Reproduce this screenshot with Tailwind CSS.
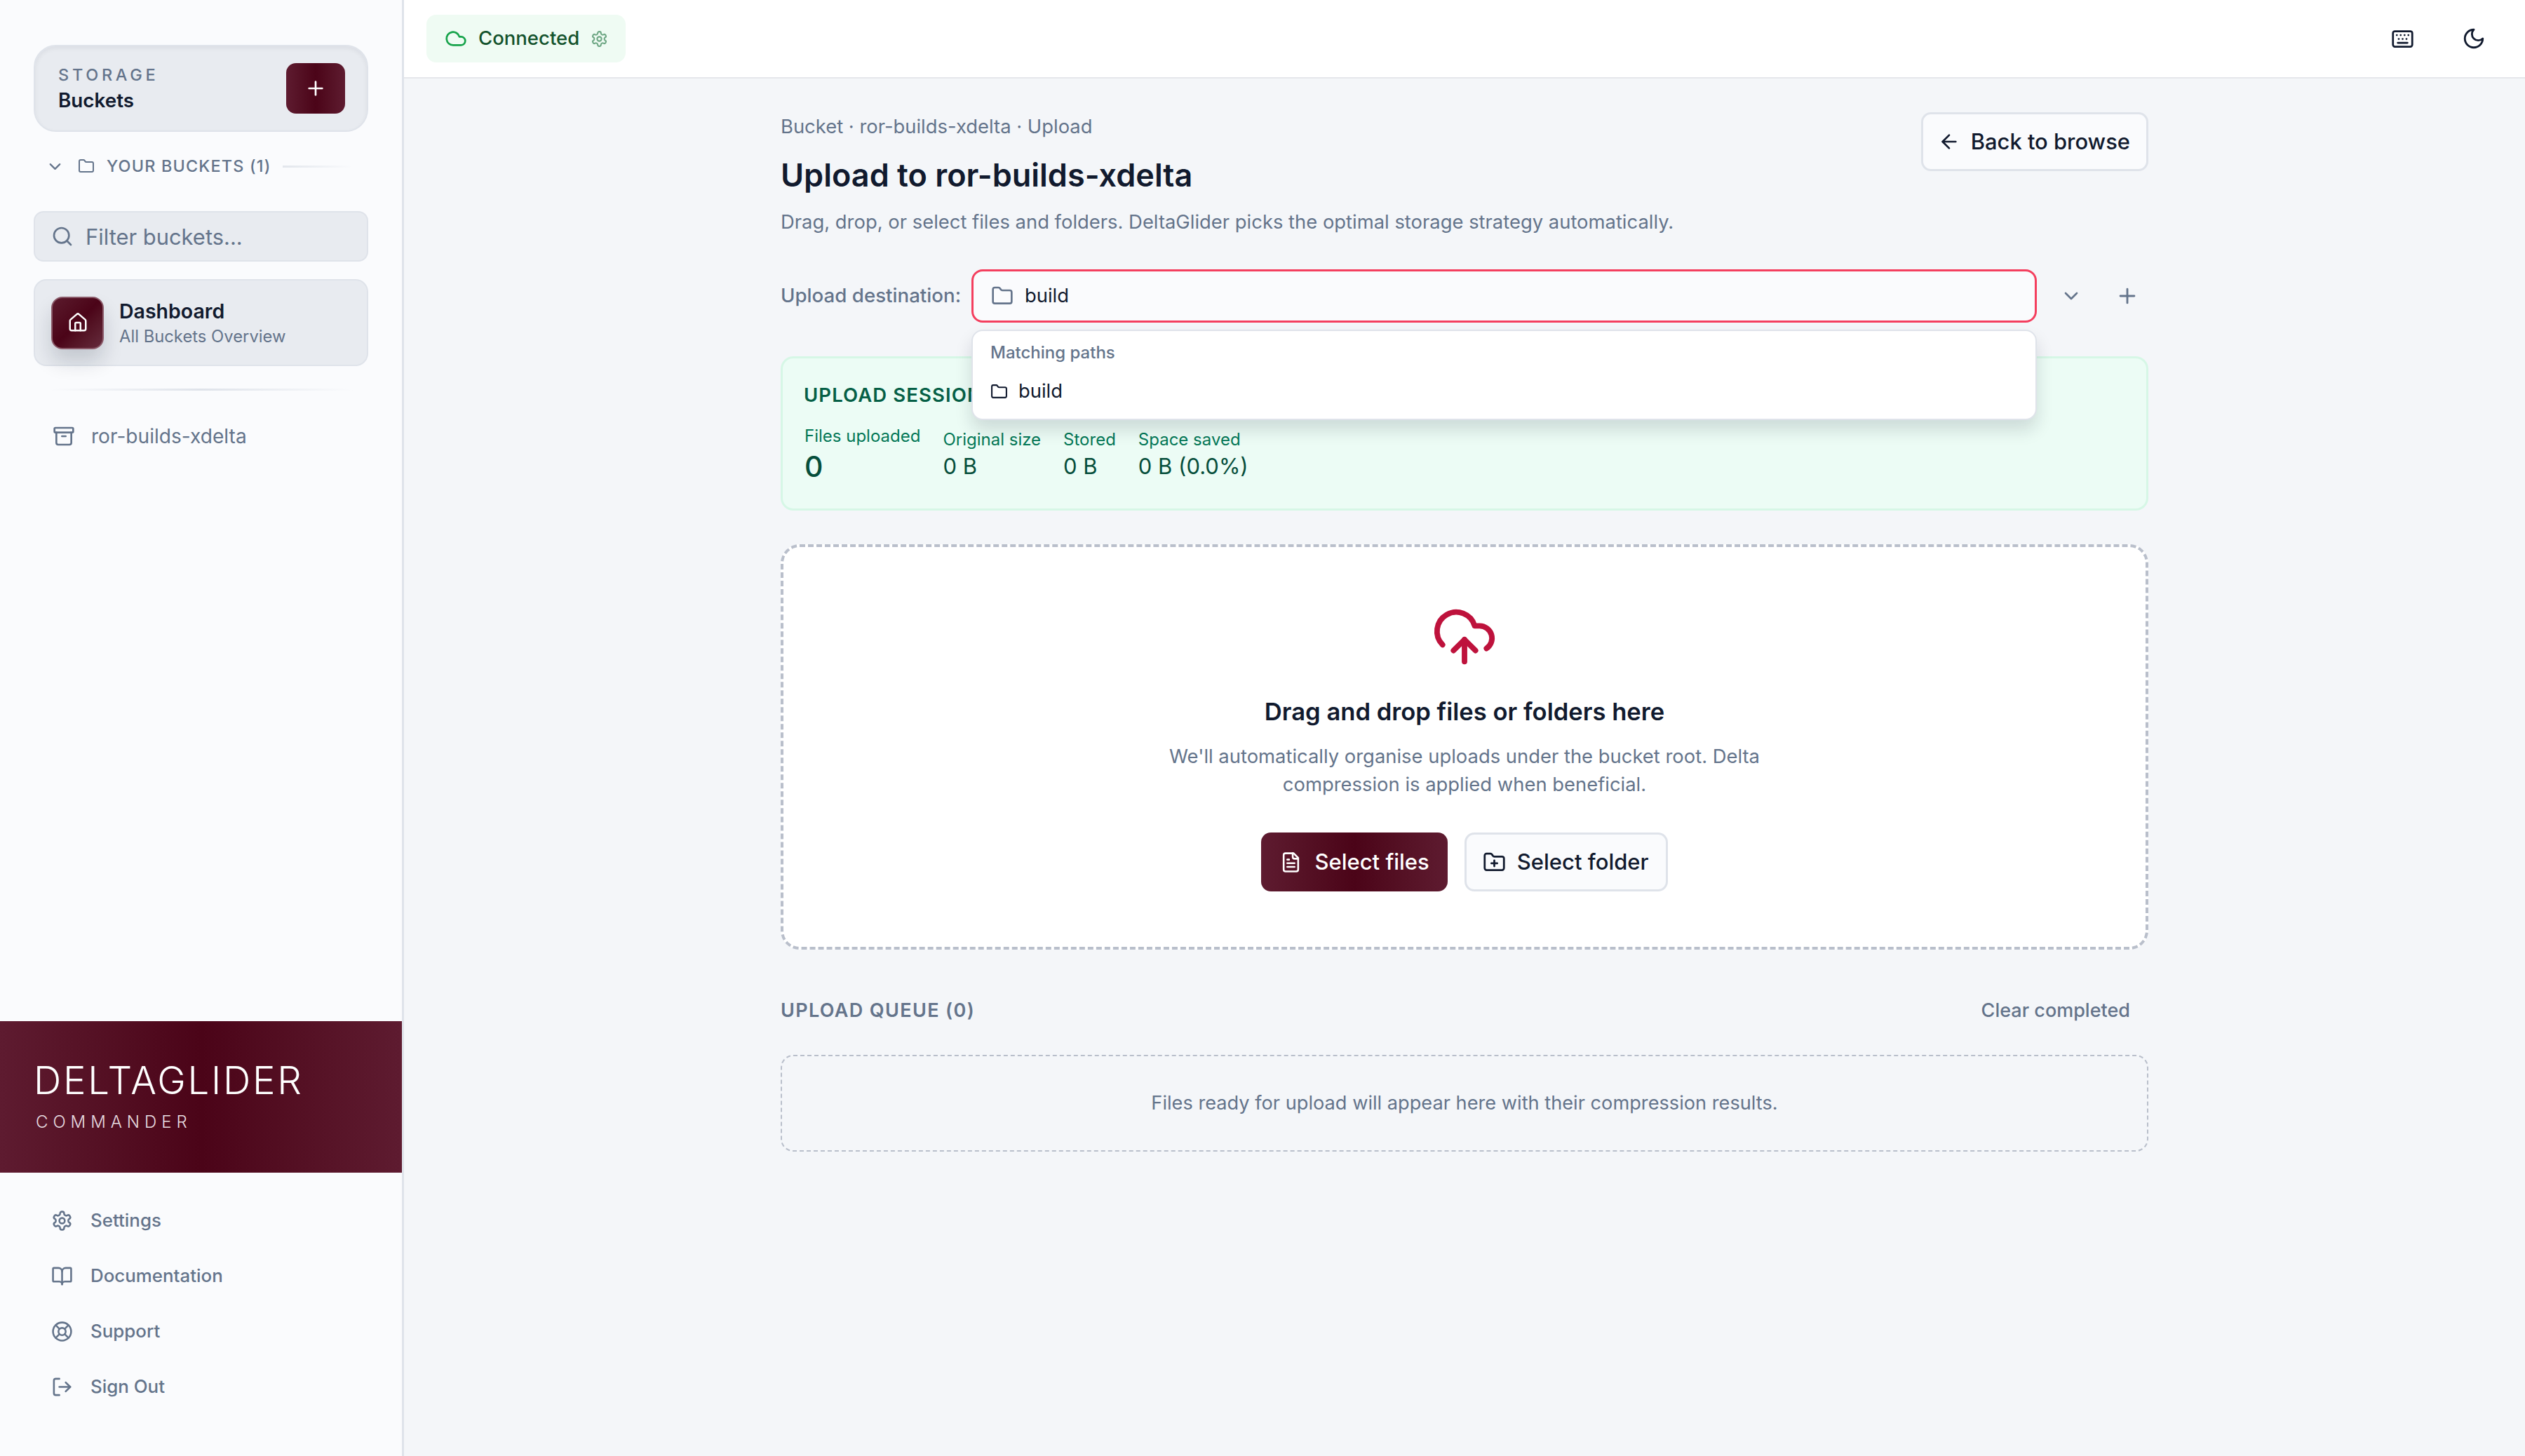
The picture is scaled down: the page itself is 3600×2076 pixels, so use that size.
<!DOCTYPE html>
<html lang="en">
  <head>
    <meta charset="UTF-8" />
    <meta name="viewport" content="width=device-width, initial-scale=1.0" />
    <script src="https://cdn.jsdelivr.net/npm/@tailwindcss/browser@4"></script>
    <title>DeltaGlider Commander</title>
  </head>
  <body class="flex h-screen overflow-hidden bg-[#f4f6f9] font-['Inter',sans-serif] text-[#111a2e]">
    <!-- SIDEBAR -->
    <aside class="flex flex-col w-[576px] h-full shrink-0 bg-[#fafbfd] border-r-[3px] border-[#dfe3ea]">
      <div class="px-[48px] pt-[64px]">
        <div class="flex items-center justify-between h-[124px] pl-[33px] pr-[31px] rounded-[32px] bg-[#e8ebf0] border-[2px] border-[#dfe3ea] shadow-[inset_0_3px_6px_rgba(15,23,42,0.06)]">
          <div class="mb-[3px]">
            <p class="text-[23.5px] leading-[36px] font-medium tracking-[0.2em] text-[#64748b]">STORAGE</p>
            <p class="text-[27.8px] leading-[36px] font-semibold text-[#111a2e]">Buckets</p>
          </div>
          <button class="flex items-center justify-center w-[84px] h-[72px] rounded-[14px] bg-linear-to-r from-[#5e1b30] via-[#4b0418] to-[#5e1b30] text-white">
            <svg class="w-[32px] h-[32px]" viewBox="0 0 24 24" fill="none" stroke="currentColor" stroke-width="2" stroke-linecap="round" stroke-linejoin="round"><path d="M5 12h14" /><path d="M12 5v14" /></svg>
          </button>
        </div>
      </div>

      <div class="flex items-center h-[36px] mt-[31px] pl-[65px] pr-[70px] text-[#64748b]">
        <svg class="w-[27px] h-[27px] shrink-0" viewBox="0 0 24 24" fill="none" stroke="currentColor" stroke-width="2" stroke-linecap="round" stroke-linejoin="round"><path d="m6 9 6 6 6-6" /></svg>
        <svg class="w-[24px] h-[24px] shrink-0 ml-[19px]" viewBox="0 0 24 24" fill="none" stroke="currentColor" stroke-width="2" stroke-linecap="round" stroke-linejoin="round"><path d="M20 20a2 2 0 0 0 2-2V8a2 2 0 0 0-2-2h-7.9a2 2 0 0 1-1.69-.9L9.6 3.9A2 2 0 0 0 7.93 3H4a2 2 0 0 0-2 2v13a2 2 0 0 0 2 2Z" /></svg>
        <span class="ml-[17px] text-[23.4px] font-medium tracking-[0.05em] whitespace-nowrap">YOUR BUCKETS (1)</span>
        <span class="flex-1 h-[3px] ml-[16px] bg-linear-to-r from-[#e2e6ec] to-transparent"></span>
      </div>

      <div class="px-[48px] mt-[46px]">
        <div class="flex items-center h-[72px] pl-[23px] rounded-[14px] bg-[#e8ebf0] border-[2px] border-[#dfe3ea]">
          <svg class="w-[32px] h-[32px] shrink-0 text-[#64748b]" viewBox="0 0 24 24" fill="none" stroke="currentColor" stroke-width="2" stroke-linecap="round" stroke-linejoin="round"><circle cx="11" cy="11" r="8" /><path d="m21 21-4.3-4.3" /></svg>
          <span class="ml-[17px] mt-[2px] text-[30.9px] text-[#64748b]">Filter buckets...</span>
        </div>

        <div class="flex items-center h-[124px] mt-[25px] pl-[23px] rounded-[18px] bg-[#e8ebf0] border-[2px] border-[#dfe3ea]">
          <div class="flex items-center justify-center w-[75px] h-[75px] rounded-[16px] bg-linear-to-br from-[#5b1a2d] via-[#4b0418] to-[#652b3d] border-[2px] border-[#8a5a69] text-white shadow-[0_18px_28px_rgba(15,23,42,0.16)]">
            <svg class="w-[30px] h-[30px]" viewBox="0 0 24 24" fill="none" stroke="currentColor" stroke-width="2" stroke-linecap="round" stroke-linejoin="round"><path d="M15 21v-8a1 1 0 0 0-1-1h-4a1 1 0 0 0-1 1v8" /><path d="M3 10a2 2 0 0 1 .709-1.528l7-5.999a2 2 0 0 1 2.582 0l7 5.999A2 2 0 0 1 21 10v9a2 2 0 0 1-2 2H5a2 2 0 0 1-2-2z" /></svg>
          </div>
          <div class="ml-[22px] mt-[2px]">
            <p class="text-[28.5px] leading-[38px] font-semibold text-[#111a2e]">Dashboard</p>
            <p class="text-[23.8px] leading-[34px] text-[#64748b]">All Buckets Overview</p>
          </div>
        </div>
      </div>

      <div class="h-[3px] mt-[32px] mx-[70px] bg-linear-to-r from-transparent via-[#dfe3ea] to-transparent"></div>

      <div class="flex items-center h-[50px] mt-[40px] pl-[75px] text-[#64748b]">
        <svg class="w-[32px] h-[32px] shrink-0" viewBox="0 0 24 24" fill="none" stroke="currentColor" stroke-width="2" stroke-linecap="round" stroke-linejoin="round"><rect width="20" height="5" x="2" y="3" rx="1" /><path d="M4 8v11a2 2 0 0 0 2 2h12a2 2 0 0 0 2-2V8" /><path d="M10 12h4" /></svg>
        <span class="ml-[23px] text-[28.1px]">ror-builds-xdelta</span>
      </div>

      <!-- BRAND -->
      <div class="mt-auto flex flex-col justify-center h-[216px] pl-[48px] bg-linear-to-r from-[#5e1b30] via-[#4b0418] to-[#5e1b30]">
        <p class="-mt-[4px] text-[54.6px] leading-[64px] font-light tracking-[0.05em] text-white">DELTAGLIDER</p>
        <p class="ml-[3px] mt-[12px] text-[24px] leading-[32px] font-light tracking-[0.29em] text-[#e8dde1]">COMMANDER</p>
      </div>

      <!-- SIDEBAR FOOTER -->
      <nav class="flex flex-col gap-[47px] pt-[52px] pb-[83px] pl-[73px] text-[#64748b] text-[25.9px] font-medium">
        <a class="flex items-center h-[32px] gap-[25px]">
          <svg class="w-[31px] h-[31px] shrink-0" viewBox="0 0 24 24" fill="none" stroke="currentColor" stroke-width="2" stroke-linecap="round" stroke-linejoin="round"><path d="M12.22 2h-.44a2 2 0 0 0-2 2v.18a2 2 0 0 1-1 1.73l-.43.25a2 2 0 0 1-2 0l-.15-.08a2 2 0 0 0-2.73.73l-.22.38a2 2 0 0 0 .73 2.73l.15.1a2 2 0 0 1 1 1.72v.51a2 2 0 0 1-1 1.74l-.15.09a2 2 0 0 0-.73 2.73l.22.38a2 2 0 0 0 2.73.73l.15-.08a2 2 0 0 1 2 0l.43.25a2 2 0 0 1 1 1.73V20a2 2 0 0 0 2 2h.44a2 2 0 0 0 2-2v-.18a2 2 0 0 1 1-1.73l.43-.25a2 2 0 0 1 2 0l.15.08a2 2 0 0 0 2.73-.73l.22-.39a2 2 0 0 0-.73-2.73l-.15-.08a2 2 0 0 1-1-1.74v-.5a2 2 0 0 1 1-1.74l.15-.09a2 2 0 0 0 .73-2.73l-.22-.38a2 2 0 0 0-2.73-.73l-.15.08a2 2 0 0 1-2 0l-.43-.25a2 2 0 0 1-1-1.73V4a2 2 0 0 0-2-2z" /><circle cx="12" cy="12" r="3" /></svg>
          Settings
        </a>
        <a class="flex items-center h-[32px] gap-[25px]">
          <svg class="w-[31px] h-[31px] shrink-0" viewBox="0 0 24 24" fill="none" stroke="currentColor" stroke-width="2" stroke-linecap="round" stroke-linejoin="round"><path d="M12 7v14" /><path d="M3 18a1 1 0 0 1-1-1V4a1 1 0 0 1 1-1h5a4 4 0 0 1 4 4 4 4 0 0 1 4-4h5a1 1 0 0 1 1 1v13a1 1 0 0 1-1 1h-6a3 3 0 0 0-3 3 3 3 0 0 0-3-3z" /></svg>
          Documentation
        </a>
        <a class="flex items-center h-[32px] gap-[25px]">
          <svg class="w-[31px] h-[31px] shrink-0" viewBox="0 0 24 24" fill="none" stroke="currentColor" stroke-width="2" stroke-linecap="round" stroke-linejoin="round"><circle cx="12" cy="12" r="10" /><path d="m4.93 4.93 4.24 4.24" /><path d="m14.83 9.17 4.24-4.24" /><path d="m14.83 14.83 4.24 4.24" /><path d="m9.17 14.83-4.24 4.24" /><circle cx="12" cy="12" r="4" /></svg>
          Support
        </a>
        <a class="flex items-center h-[32px] gap-[25px]">
          <svg class="w-[31px] h-[31px] shrink-0" viewBox="0 0 24 24" fill="none" stroke="currentColor" stroke-width="2" stroke-linecap="round" stroke-linejoin="round"><path d="M9 21H5a2 2 0 0 1-2-2V5a2 2 0 0 1 2-2h4" /><path d="m16 17 5-5-5-5" /><path d="M21 12H9" /></svg>
          Sign Out
        </a>
      </nav>
    </aside>

    <div class="flex flex-col flex-1 min-w-0">
      <!-- HEADER -->
      <header class="flex items-center justify-between h-[112px] shrink-0 pl-[32px] pr-[56px] bg-white border-b-[2px] border-[#e5e7eb]">
        <div class="flex items-center h-[68px] pl-[26px] pr-[25px] rounded-[14px] bg-[#effbf3]">
          <svg class="w-[32px] h-[32px] text-[#16a34a]" viewBox="0 0 24 24" fill="none" stroke="currentColor" stroke-width="2" stroke-linecap="round" stroke-linejoin="round"><path d="M17.5 19H9a7 7 0 1 1 6.71-9h1.79a4.5 4.5 0 1 1 0 9Z" /></svg>
          <span class="ml-[16px] text-[27.5px] font-medium text-[#14532d]">Connected</span>
          <svg class="ml-[16px] w-[25px] h-[25px] text-[#6ea784]" viewBox="0 0 24 24" fill="none" stroke="currentColor" stroke-width="2" stroke-linecap="round" stroke-linejoin="round"><path d="M12.22 2h-.44a2 2 0 0 0-2 2v.18a2 2 0 0 1-1 1.73l-.43.25a2 2 0 0 1-2 0l-.15-.08a2 2 0 0 0-2.73.73l-.22.38a2 2 0 0 0 .73 2.73l.15.1a2 2 0 0 1 1 1.72v.51a2 2 0 0 1-1 1.74l-.15.09a2 2 0 0 0-.73 2.73l.22.38a2 2 0 0 0 2.73.73l.15-.08a2 2 0 0 1 2 0l.43.25a2 2 0 0 1 1 1.73V20a2 2 0 0 0 2 2h.44a2 2 0 0 0 2-2v-.18a2 2 0 0 1 1-1.73l.43-.25a2 2 0 0 1 2 0l.15.08a2 2 0 0 0 2.73-.73l.22-.39a2 2 0 0 0-.73-2.73l-.15-.08a2 2 0 0 1-1-1.74v-.5a2 2 0 0 1 1-1.74l.15-.09a2 2 0 0 0 .73-2.73l-.22-.38a2 2 0 0 0-2.73-.73l-.15.08a2 2 0 0 1-2 0l-.43-.25a2 2 0 0 1-1-1.73V4a2 2 0 0 0-2-2z" /><circle cx="12" cy="12" r="3" /></svg>
        </div>
        <div class="flex items-center gap-[68px] text-[#111a2e]">
          <svg class="w-[33px] h-[33px]" viewBox="0 0 24 24" fill="none" stroke="currentColor" stroke-width="2" stroke-linecap="round" stroke-linejoin="round"><path d="M10 8h.01" /><path d="M12 12h.01" /><path d="M14 8h.01" /><path d="M16 12h.01" /><path d="M18 8h.01" /><path d="M6 8h.01" /><path d="M7 16h10" /><path d="M8 12h.01" /><rect width="20" height="16" x="2" y="4" rx="2" /></svg>
          <svg class="w-[34px] h-[34px]" viewBox="0 0 24 24" fill="none" stroke="currentColor" stroke-width="2" stroke-linecap="round" stroke-linejoin="round"><path d="M12 3a6 6 0 0 0 9 9 9 9 0 1 1-9-9Z" /></svg>
        </div>
      </header>

      <!-- MAIN -->
      <main class="flex-1 pl-[537px] pr-[537px] pt-[48px]">
        <div class="flex items-start justify-between">
          <div>
            <p class="text-[27.4px] leading-[40px] text-[#64748b]">Bucket · ror-builds-xdelta · Upload</p>
            <h1 class="mt-[20px] text-[45px] leading-[60px] font-semibold text-[#111a2e]">Upload to ror-builds-xdelta</h1>
            <p class="mt-[16px] text-[27.4px] leading-[40px] text-[#64748b] whitespace-nowrap">Drag, drop, or select files and folders. DeltaGlider picks the optimal storage strategy automatically.</p>
          </div>
          <button class="flex items-center h-[84px] pl-[21px] pr-[23px] rounded-[14px] bg-[#fafbfd] border-[3px] border-[#dfe3ea] text-[#111a2e]">
            <svg class="w-[32px] h-[32px]" viewBox="0 0 24 24" fill="none" stroke="currentColor" stroke-width="2" stroke-linecap="round" stroke-linejoin="round"><path d="m12 19-7-7 7-7" /><path d="M19 12H5" /></svg>
            <span class="ml-[15px] text-[30.9px] font-medium">Back to browse</span>
          </button>
        </div>

        <!-- destination -->
        <div class="relative flex items-center mt-[48px] h-[76px]">
          <span class="w-[272px] shrink-0 text-[27.7px] font-medium text-[#64748b]">Upload destination:</span>
          <div class="flex items-center flex-1 h-[76px] pl-[25px] rounded-[16px] bg-[#fafbfd] border-[3px] border-[#f43f5e]">
            <svg class="w-[32px] h-[32px] text-[#64748b]" viewBox="0 0 24 24" fill="none" stroke="currentColor" stroke-width="2" stroke-linecap="round" stroke-linejoin="round"><path d="M20 20a2 2 0 0 0 2-2V8a2 2 0 0 0-2-2h-7.9a2 2 0 0 1-1.69-.9L9.6 3.9A2 2 0 0 0 7.93 3H4a2 2 0 0 0-2 2v13a2 2 0 0 0 2 2Z" /></svg>
            <span class="ml-[16px] text-[27.4px] text-[#111a2e]">build</span>
          </div>
          <div class="flex items-center w-[159px] shrink-0 pl-[33px] text-[#64748b]">
            <svg class="w-[32px] h-[32px]" viewBox="0 0 24 24" fill="none" stroke="currentColor" stroke-width="2" stroke-linecap="round" stroke-linejoin="round"><path d="m6 9 6 6 6-6" /></svg>
            <svg class="ml-[47px] w-[34px] h-[34px]" viewBox="0 0 24 24" fill="none" stroke="currentColor" stroke-width="2" stroke-linecap="round" stroke-linejoin="round"><path d="M5 12h14" /><path d="M12 5v14" /></svg>
          </div>
          <!-- dropdown over the session card -->
          <div class="absolute z-10 left-[272px] right-[159px] top-[86px] h-[129px] pl-[25px] rounded-[16px] bg-white border-[2px] border-[#dfe3ea] shadow-[0_14px_24px_rgba(15,23,42,0.14)]">
            <p class="mt-[13px] text-[24px] leading-[36px] font-medium text-[#64748b]">Matching paths</p>
            <div class="flex items-center mt-[18px] h-[38px] text-[#111a2e]">
              <svg class="w-[25px] h-[25px]" viewBox="0 0 24 24" fill="none" stroke="currentColor" stroke-width="2" stroke-linecap="round" stroke-linejoin="round"><path d="M20 20a2 2 0 0 0 2-2V8a2 2 0 0 0-2-2h-7.9a2 2 0 0 1-1.69-.9L9.6 3.9A2 2 0 0 0 7.93 3H4a2 2 0 0 0-2 2v13a2 2 0 0 0 2 2Z" /></svg>
              <span class="ml-[15px] text-[27.4px]">build</span>
            </div>
          </div>
        </div>

        <!-- session -->
        <section class="h-[220px] mt-[48px] px-[31px] pt-[32px] rounded-[18px] bg-[#ecfcf5] border-[3px] border-[#d6f7e6]">
          <h2 class="-ml-[1px] text-[27.5px] leading-[40px] font-semibold tracking-[0.04em] text-[#065f46]">UPLOAD SESSION</h2>
          <div class="flex items-end gap-[32px] mt-[23px]">
            <div>
              <p class="text-[24px] leading-[32px] text-[#047857]">Files uploaded</p>
              <p class="mt-[5px] text-[41px] leading-[44px] font-medium text-[#064e3b]">0</p>
            </div>
            <div>
              <p class="text-[24px] leading-[32px] text-[#047857]">Original size</p>
              <p class="text-[31px] leading-[44px] text-[#064e3b]">0 B</p>
            </div>
            <div>
              <p class="text-[24px] leading-[32px] text-[#047857]">Stored</p>
              <p class="text-[31px] leading-[44px] text-[#064e3b]">0 B</p>
            </div>
            <div>
              <p class="text-[24px] leading-[32px] text-[#047857]">Space saved</p>
              <p class="text-[31px] leading-[44px] text-[#064e3b]">0 B (0.0%)</p>
            </div>
          </div>
        </section>

        <!-- dropzone -->
        <section class="flex flex-col items-center h-[578px] mt-[48px] pt-[81px] rounded-[27px] bg-white border-[4px] border-dashed border-[#b9bfcb]">
          <svg class="w-[94px] h-[94px] text-[#be123c]" viewBox="0 0 24 24" fill="none" stroke="currentColor" stroke-width="2" stroke-linecap="round" stroke-linejoin="round"><path d="M12 13v8" /><path d="M4 14.899A7 7 0 1 1 15.71 8h1.79a4.5 4.5 0 0 1 2.5 8.242" /><path d="m8 17 4-4 4 4" /></svg>
          <h3 class="mt-[33px] text-[34.6px] leading-[52px] font-semibold text-[#111a2e]">Drag and drop files or folders here</h3>
          <p class="mt-[18px] w-[880px] text-center text-[27.4px] leading-[40px] text-[#64748b]">We'll automatically organise uploads under the bucket root. Delta compression is applied when beneficial.</p>
          <div class="flex gap-[24px] mt-[49px]">
            <button class="flex items-center h-[84px] pl-[27px] pr-[26px] rounded-[14px] bg-linear-to-r from-[#5e1b30] via-[#4b0418] to-[#5e1b30] text-white">
              <svg class="w-[31px] h-[31px]" viewBox="0 0 24 24" fill="none" stroke="currentColor" stroke-width="2" stroke-linecap="round" stroke-linejoin="round"><path d="M15 2H6a2 2 0 0 0-2 2v16a2 2 0 0 0 2 2h12a2 2 0 0 0 2-2V7Z" /><path d="M14 2v4a2 2 0 0 0 2 2h4" /><path d="M10 9H8" /><path d="M16 13H8" /><path d="M16 17H8" /></svg>
              <span class="ml-[18px] text-[31px] font-medium">Select files</span>
            </button>
            <button class="flex items-center h-[84px] pl-[23px] pr-[24px] rounded-[14px] bg-[#fafbfd] border-[3px] border-[#dfe3ea] text-[#111a2e]">
              <svg class="w-[33px] h-[33px]" viewBox="0 0 24 24" fill="none" stroke="currentColor" stroke-width="2" stroke-linecap="round" stroke-linejoin="round"><path d="M12 10v6" /><path d="M9 13h6" /><path d="M20 20a2 2 0 0 0 2-2V8a2 2 0 0 0-2-2h-7.9a2 2 0 0 1-1.69-.9L9.6 3.9A2 2 0 0 0 7.93 3H4a2 2 0 0 0-2 2v13a2 2 0 0 0 2 2Z" /></svg>
              <span class="ml-[16px] text-[31px] font-medium">Select folder</span>
            </button>
          </div>
        </section>

        <!-- queue -->
        <div class="flex items-center justify-between h-[40px] mt-[67px] pr-[26px] text-[#64748b]">
          <h2 class="text-[27px] font-semibold tracking-[0.05em]">UPLOAD QUEUE (0)</h2>
          <span class="text-[27px] font-medium">Clear completed</span>
        </div>
        <div class="flex items-center justify-center h-[138px] mt-[43px] rounded-[18px] border-[2px] border-dashed border-[#b9bfcb] text-[27.2px] text-[#64748b]">
          Files ready for upload will appear here with their compression results.
        </div>
      </main>
    </div>
  </body>
</html>
